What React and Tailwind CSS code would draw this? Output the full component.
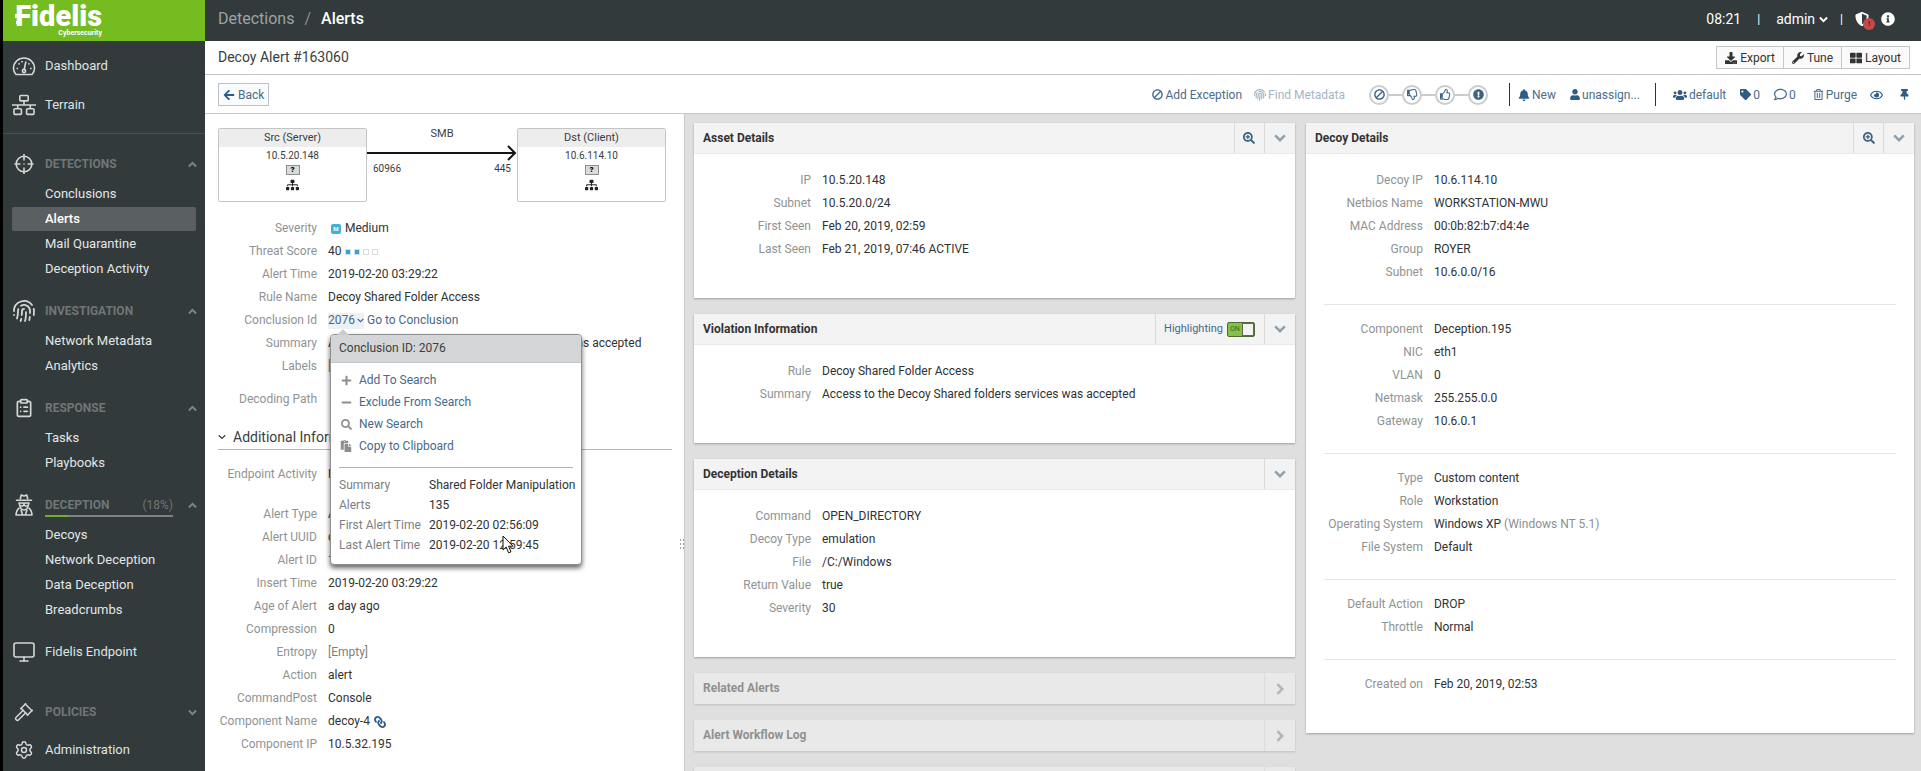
import React, { useState } from 'react';
import { Fingerprint, Monitor, Gavel, Settings, ClipboardList } from 'lucide-react';
import {
  FaArrowLeft, FaBan, FaBell, FaDownload, FaExclamationCircle, FaFingerprint, FaInfoCircle,
  FaLink, FaMinus, FaPaste, FaPlus, FaRegComment, FaRegEye, FaRegThumbsDown, FaRegThumbsUp,
  FaRegTrashAlt, FaSearch, FaSearchPlus, FaShieldAlt, FaSitemap, FaTag, FaThLarge, FaThumbtack,
  FaUser, FaUsers, FaWrench,
} from 'react-icons/fa';

const Chevron = ({ className = '', strokeWidth = 2.6 }) => (
  <svg viewBox="0 0 12 12" className={className} fill="none" stroke="currentColor" strokeWidth={strokeWidth}>
    <path d="M1.2 3.4 L6 8.2 L10.8 3.4" />
  </svg>
);

const GaugeIcon = () => (
  <svg viewBox="0 0 24 24" className="w-6 h-6" fill="none" stroke="currentColor" strokeWidth="1.6">
    <path d="M4 20.5 C2.4 19 1.5 16.8 1.5 14.3 C1.5 8.5 6.2 4 12 4 S22.5 8.5 22.5 14.3 C22.5 16.8 21.6 19 20 20.5 Z" strokeLinejoin="round" />
    <path d="M13.8 8 L12.2 15.5" strokeLinecap="round" />
    <circle cx="12" cy="17" r="1.6" />
    <path d="M4.5 14.5 h1.6 M18 14.5 h1.6 M6.5 9.3 l1.1 1 M17.5 9.3 l-1.1 1 M10 7 v1.4" />
  </svg>
);

const TerrainIcon = () => (
  <svg viewBox="0 0 24 24" className="w-6 h-6" fill="none" stroke="currentColor" strokeWidth="1.6">
    <rect x="7.8" y="2.5" width="8.4" height="5.4" rx="1" />
    <rect x="2" y="15.8" width="7.4" height="5.6" rx="1" />
    <rect x="14.6" y="15.8" width="7.4" height="5.6" rx="1" />
    <path d="M0 12 H24 M12 8 V12 M5.7 12 V15.8 M18.3 12 V15.8" />
  </svg>
);

const TargetIcon = () => (
  <svg viewBox="0 0 24 24" className="w-6 h-6" fill="none" stroke="currentColor" strokeWidth="1.6">
    <circle cx="12" cy="12" r="7.8" />
    <path d="M12 2 V8.5 M12 15.5 V22 M2.5 12 H8.5 M15.5 12 H21.5" />
    <circle cx="12" cy="12" r="0.8" fill="currentColor" stroke="none" />
  </svg>
);

const SpyIcon = () => (
  <svg viewBox="0 0 24 24" className="w-6 h-6" fill="none" stroke="currentColor" strokeWidth="1.6" strokeLinejoin="round">
    <path d="M8.2 6.4 L9.2 2 L12 3 L14.8 2 L15.8 6.4" />
    <path d="M4.5 7.2 H19.5" strokeLinecap="round" />
    <path d="M7 10 H11 L12 10.6 L13 10 H17 L16 13 H13.3 L12 11.6 L10.7 13 H8 Z" />
    <path d="M8 13.2 C8.5 15.6 10 17 12 17 S15.5 15.6 16 13.2" />
    <path d="M7.6 15 C5.4 16 4.3 18 4 22 H20 C19.7 18 18.6 16 16.4 15" />
    <path d="M9 16.8 L10.6 22 M15 16.8 L13.4 22" />
  </svg>
);

const NAV_SECTIONS = [
  { title: 'DETECTIONS', icon: <TargetIcon />, items: ['Conclusions', 'Alerts', 'Mail Quarantine', 'Deception Activity'] },
  { title: 'INVESTIGATION', icon: <Fingerprint className="w-6 h-6" strokeWidth={1.8} />, items: ['Network Metadata', 'Analytics'] },
  { title: 'RESPONSE', icon: <ClipboardList className="w-5 h-5" strokeWidth={2} />, items: ['Tasks', 'Playbooks'] },
  { title: 'DECEPTION', icon: <SpyIcon />, progress: 18, items: ['Decoys', 'Network Deception', 'Data Deception', 'Breadcrumbs'] },
];

const NavLink = ({ icon, label }) => (
  <a href="#" className="flex items-center h-[39px] pl-[9px] text-[13px] text-[#dfe3e3]">
    <span className="w-6 mr-[9px] flex justify-center text-[#d4d8d8]">{icon}</span>
    {label}
  </a>
);

const SectionHeader = ({ title, icon, progress, open = true }) => (
  <button type="button" className="flex items-center w-full h-9 pl-[9px] pr-2 text-left">
    <span className="w-6 mr-[9px] flex justify-center text-[#d4d8d8]">{icon}</span>
    <span className="relative flex items-center justify-between w-32 h-6 text-[12px] font-bold text-[#6f7677]">
      {title}
      {progress && <span className="font-normal">({progress}%)</span>}
      {progress && (
        <span className="absolute left-0 right-0 bottom-0 h-0.5 bg-[#7d8384]">
          <span className="block h-full bg-[#6fae2e]" style={{ width: `${progress}%` }} />
        </span>
      )}
    </span>
    <Chevron className={`ml-auto w-[9px] h-[9px] text-[#7d8485] ${open ? 'rotate-180' : ''}`} />
  </button>
);

const Sidebar = () => (
  <nav className="w-[205px] shrink-0 border-l-[3px] border-black bg-[#323a3b] overflow-hidden">
    <a href="#" className="block h-[41px] bg-[#74bc1f] text-white">
      <span className="relative flex flex-col items-end w-[99px] pt-[3px]">
        <span className="text-[29px] leading-[27px] font-black">Fidelis</span>
        <span className="text-[7px] leading-[7px] font-bold">Cybersecurity</span>
        <svg viewBox="0 0 6 24" className="absolute left-3 top-[6px] w-[6px] h-6" fill="currentColor">
          <rect x="2" y="1" width="3" height="3" />
          <rect x="0" y="8" width="3" height="4" />
          <rect x="1" y="15" width="3" height="3" />
        </svg>
      </span>
    </a>
    <div className="pt-[5px] pb-[9px] border-b border-[#4a5152]">
      <NavLink icon={<GaugeIcon />} label="Dashboard" />
      <NavLink icon={<TerrainIcon />} label="Terrain" />
    </div>
    {NAV_SECTIONS.map((section) => (
      <div key={section.title} className="mt-3">
        <SectionHeader {...section} />
        <ul className="flex flex-col gap-px mx-[9px]">
          {section.items.map((item) => (
            <li key={item}>
              <a
                href="#"
                className={`flex items-center h-6 pl-[33px] text-[13px] rounded-xs ${
                  item === 'Alerts' ? 'bg-[#5a6061] text-white font-medium' : 'text-[#e3e6e6]'
                }`}
              >
                {item}
              </a>
            </li>
          ))}
        </ul>
      </div>
    ))}
    <div className="pt-[10px]">
      <NavLink icon={<Monitor className="w-6 h-6" strokeWidth={1.6} />} label="Fidelis Endpoint" />
    </div>
    <div className="pt-[23px]">
      <SectionHeader title="POLICIES" icon={<Gavel className="w-5 h-5" strokeWidth={1.8} />} open={false} />
      <NavLink icon={<Settings className="w-5 h-5" strokeWidth={1.8} />} label="Administration" />
    </div>
  </nav>
);

const TopBar = () => (
  <header className="flex items-center justify-between h-[41px] pb-[3px] pl-[13px] pr-[26px] bg-[#323a3b] text-white">
    <div className="flex items-center text-[16px]">
      <a href="#" className="text-[#9ea3a3]">Detections</a>
      <span className="mx-[10px] text-[#8a9090]">/</span>
      <span className="font-medium">Alerts</span>
    </div>
    <div className="flex items-center text-[14px]">
      <span>08:21</span>
      <span className="mx-4 text-[12px]">|</span>
      <button type="button" className="flex items-center gap-1">
        admin <Chevron className="w-[9px] h-[9px]" />
      </button>
      <span className="mx-3 text-[12px]">|</span>
      <button type="button" aria-label="System health" className="relative w-5 h-4 mr-[6px]">
        <FaShieldAlt className="w-[14px] h-[14px]" />
        <span className="absolute right-0 -bottom-[3px] flex items-center justify-center w-3 h-3 rounded-full bg-[#c64a4c] text-[8px] font-bold text-[#5e1d1f]">!</span>
      </button>
      <button type="button" aria-label="About"><FaInfoCircle className="w-[14px] h-[14px]" /></button>
    </div>
  </header>
);

const HeaderButton = ({ icon, label }) => (
  <button type="button" className="flex items-center gap-[3px] h-[23px] px-2 -ml-px border border-[#c4c8c8] bg-[#fafafa] text-[12px] text-[#333]">
    {icon}
    {label}
  </button>
);

const ToolButton = ({ icon, label, name, className = '' }) => (
  <button type="button" aria-label={name} className={`flex items-center gap-[2px] text-[12px] text-[#4a6d8a] ${className}`}>
    {icon}
    {label}
  </button>
);

const STATUS_STEPS = [
  { name: 'Ignore', icon: <FaBan className="w-[11px] h-[11px] -scale-x-100" /> },
  { name: 'Dislike', icon: <FaRegThumbsDown className="w-[11px] h-[11px]" /> },
  { name: 'Like', icon: <FaRegThumbsUp className="w-[11px] h-[11px]" /> },
  { name: 'Important', icon: <FaExclamationCircle className="w-[11px] h-[11px]" /> },
];

const Toolbar = () => (
  <div className="flex items-center justify-between h-[39px] pt-px pl-[13px] pr-3 border-b border-[#c6c8c8]">
    <button type="button" className="flex items-center gap-[3px] h-[23px] px-[4px] border border-[#b9c2ca] bg-[#fafbfc] text-[12px] text-[#4a6d8a]">
      <FaArrowLeft className="w-3 h-3 text-[#2d5c86]" />
      Back
    </button>
    <div className="flex items-center">
      <ToolButton icon={<FaBan className="w-[11px] h-[11px] -scale-x-100" />} label="Add Exception" />
      <ToolButton icon={<FaFingerprint className="w-3 h-3" />} label="Find Metadata" className="ml-3 opacity-50" />
      <div className="flex items-center ml-6">
        {STATUS_STEPS.map((step, index) => (
          <React.Fragment key={step.name}>
            {index > 0 && <span className="w-[13px] h-0.5 bg-[#c9cccd]" />}
            <button
              type="button"
              aria-label={step.name}
              className="flex items-center justify-center w-5 h-5 rounded-full border-2 border-[#c9cccd] text-[#3d6382]"
            >
              {step.icon}
            </button>
          </React.Fragment>
        ))}
      </div>
      <span className="w-px h-[23px] ml-[21px] mr-2 bg-[#333]" />
      <ToolButton icon={<FaBell className="w-3 h-3 text-[#2d5c86]" />} label="New" />
      <ToolButton icon={<FaUser className="w-[10px] h-[11px] text-[#2d5c86]" />} label="unassign..." className="ml-[14px]" />
      <span className="w-px h-[23px] ml-[15px] mr-[17px] bg-[#333]" />
      <ToolButton icon={<FaUsers className="w-[14px] h-[14px] text-[#2d5c86]" />} label="default" />
      <ToolButton icon={<FaTag className="w-[11px] h-[11px] text-[#2d5c86]" />} label="0" className="ml-[14px]" />
      <ToolButton icon={<FaRegComment className="w-[13px] h-[13px]" />} label="0" className="ml-[14px]" />
      <ToolButton icon={<FaRegTrashAlt className="w-[11px] h-[11px]" />} label="Purge" className="ml-[17px]" />
      <ToolButton icon={<FaRegEye className="w-[13px] h-3 text-[#2d5c86]" />} name="Watch" className="ml-[13px]" />
      <ToolButton icon={<FaThumbtack className="w-[9px] h-[11px] text-[#2d5c86]" />} name="Pin" className="ml-[17px]" />
    </div>
  </div>
);

const Row = ({ label, children, className = '' }) => (
  <div className={`flex h-[23px] leading-[23px] text-[12px] ${className}`}>
    <dt className="w-[117px] mr-[11px] shrink-0 text-right text-[#909394]">{label}</dt>
    <dd className="relative whitespace-nowrap text-[#2f3233]">{children}</dd>
  </div>
);

const HostBox = ({ title, ip }) => (
  <div className="flex flex-col items-center w-[149px] h-[74px] rounded-xs border border-[#c4c6c6] bg-white text-[#3a3d3d]">
    <div className="w-full h-[18px] leading-[18px] text-center text-[11px] bg-[#ededed]">{title}</div>
    <div className="h-[18px] leading-[18px] text-[10px]">{ip}</div>
    <div className="w-[14px] h-[10px] leading-[8px] border border-[#8d8f8f] bg-[#d9dada] text-center text-[8px] font-black text-black">?</div>
    <FaSitemap className="w-[13px] h-3 mt-1 text-[#222]" />
  </div>
);

const FlowDiagram = () => (
  <div className="flex w-[448px]">
    <HostBox title="Src (Server)" ip="10.5.20.148" />
    <div className="flex-1 text-[#3a3d3d]">
      <div className="h-4 leading-[12px] text-center text-[11px]">SMB</div>
      <svg viewBox="0 0 150 18" className="block w-full h-[18px]" fill="none" stroke="#151515" strokeWidth="2">
        <path d="M0 9 H148 M141 2 L148 9 L141 16" />
      </svg>
      <div className="flex justify-between px-[6px] leading-[14px] text-[10px]">
        <span>60966</span>
        <span>445</span>
      </div>
    </div>
    <HostBox title="Dst (Client)" ip="10.6.114.10" />
  </div>
);

const MENU_ITEMS = [
  { label: 'Add To Search', icon: <FaPlus className="w-[11px] h-[11px]" /> },
  { label: 'Exclude From Search', icon: <FaMinus className="w-[11px] h-[11px]" /> },
  { label: 'New Search', icon: <FaSearch className="w-[11px] h-[11px]" /> },
  { label: 'Copy to Clipboard', icon: <FaPaste className="w-3 h-3" /> },
];

const MENU_DETAILS = [
  ['Summary', 'Shared Folder Manipulation'],
  ['Alerts', '135'],
  ['First Alert Time', '2019-02-20 02:56:09'],
  ['Last Alert Time', '2019-02-20 12:59:45'],
];

const ConclusionPopover = () => (
  <div className="absolute left-[2px] top-[25px] z-10 w-[252px] h-[231px] rounded border border-[#8e9091] bg-white shadow-[0_3px_5px_rgba(0,0,0,0.6)]">
    <span className="absolute left-[6px] -top-[6px] w-0 h-0 border-x-[6px] border-x-transparent border-b-[6px] border-b-[#c9cbcc]" />
    <div className="h-7 leading-[27px] pl-2 rounded-t bg-[#d3d5d6] border-b border-[#c4c6c7] text-[#3d4041]">Conclusion ID: 2076</div>
    <ul className="pt-[6px]">
      {MENU_ITEMS.map((item) => (
        <li key={item.label}>
          <button type="button" className="flex items-center h-[22px] pl-[9px] text-[#47698a]">
            <span className="w-3 mr-[7px] flex justify-center text-[#8c8f90]">{item.icon}</span>
            {item.label}
          </button>
        </li>
      ))}
    </ul>
    <dl className="mx-2 mt-[10px] pt-[7px] border-t border-[#b4b6b6]">
      {MENU_DETAILS.map(([label, value]) => (
        <div key={label} className="flex h-5 leading-5">
          <dt className="w-[90px] shrink-0 text-[#7c7f80]">{label}</dt>
          <dd>{value}</dd>
        </div>
      ))}
    </dl>
    <svg viewBox="0 0 12 19" className="absolute left-[171px] top-[200px] w-3 h-[19px]" fill="#fff" stroke="#111" strokeWidth="1">
      <path d="M1 1 V15 L4.2 12 L6.6 17.8 L9 16.8 L6.6 11.2 H11 Z" />
    </svg>
  </div>
);

const AlertPanel = () => (
  <section className="relative w-[480px] shrink-0 bg-white border-r border-[#c9cbcb]">
    <div className="pt-[14px] pl-[13px]">
      <FlowDiagram />
    </div>
    <dl className="-ml-[5px] pt-[15px]">
      <Row label="Severity">
        <span className="flex items-center gap-1 pl-[3px]">
          <span className="flex items-center justify-center w-[10px] h-[10px] rounded-xs bg-[#3fb2dc] text-[6px] font-bold text-white">M</span>
          Medium
        </span>
      </Row>
      <Row label="Threat Score">
        <span className="flex items-center gap-[3px]">
          40
          <span className="w-[6px] h-[6px] border border-[#c4e4f2] bg-[#3f9fc9]" />
          <span className="w-[6px] h-[6px] border border-[#c4e4f2] bg-[#3f9fc9]" />
          <span className="w-[6px] h-[6px] border border-[#d9dcdd]" />
          <span className="w-[6px] h-[6px] border border-[#d9dcdd]" />
        </span>
      </Row>
      <Row label="Alert Time">2019-02-20 03:29:22</Row>
      <Row label="Rule Name">Decoy Shared Folder Access</Row>
      <Row label="Conclusion Id">
        <span className="flex items-center h-full gap-[3px] text-[#47698a]">
          <button type="button" className="flex items-center gap-[2px] h-4 bg-[#edf1f6]">
            2076 <Chevron className="w-[7px] h-[7px]" strokeWidth={2} />
          </button>
          <a href="#">Go to Conclusion</a>
        </span>
        <ConclusionPopover />
      </Row>
      <Row label="Summary">Access to the Decoy Shared folders services was accepted</Row>
      <Row label="Labels"><span className="text-[#7c7f80]">[Empty]</span></Row>
      <Row label="Decoding Path" className="mt-[10px]">{''}</Row>
    </dl>
    <h2 className="flex items-center gap-[7px] h-[39px] pt-[14px] ml-[13px] mr-3 border-b border-[#b4b6b6] text-[14px] text-[#3a3d3d]">
      <Chevron className="w-2 h-2" strokeWidth={1.8} />
      Additional Information
    </h2>
    <dl className="-ml-[5px] pt-[13px]">
      <Row label="Endpoint Activity">N/A</Row>
      <Row label="Alert Type" className="mt-[17px]">Alert</Row>
      <Row label="Alert UUID">c163060</Row>
      <Row label="Alert ID">163060</Row>
      <Row label="Insert Time">2019-02-20 03:29:22</Row>
      <Row label="Age of Alert">a day ago</Row>
      <Row label="Compression">0</Row>
      <Row label="Entropy"><span className="text-[#7c7f80]">[Empty]</span></Row>
      <Row label="Action">alert</Row>
      <Row label="CommandPost">Console</Row>
      <Row label="Component Name">
        <a href="#" className="flex items-center gap-1">
          decoy-4 <FaLink className="w-3 h-3 -scale-x-100 text-[#2d5c86]" />
        </a>
      </Row>
      <Row label="Component IP">10.5.32.195</Row>
    </dl>
    <svg viewBox="0 0 4 12" className="absolute right-0 top-[424px] w-1 h-3" fill="#9a9c9c">
      <path d="M0 1 h1 v2 h-1 Z M3 1 h1 v2 h-1 Z M0 5 h1 v2 h-1 Z M3 5 h1 v2 h-1 Z M0 9 h1 v2 h-1 Z M3 9 h1 v2 h-1 Z" />
    </svg>
  </section>
);

const Card = ({ title, zoom, actions, children }) => (
  <section className="bg-white shadow-[0_1px_2px_rgba(0,0,0,0.3)]">
    <div className="flex h-[31px] bg-[#f3f3f3] border-b border-[#e9e9e9]">
      <h2 className="flex-1 pl-[9px] leading-[30px] text-[12px] font-bold text-[#333]">{title}</h2>
      {actions}
      {zoom && (
        <button type="button" aria-label={`Zoom ${title}`} className="flex items-center justify-center w-[30px] border-l border-[#dadada] text-[#3d6382]">
          <FaSearchPlus className="w-3 h-3" />
        </button>
      )}
      <button type="button" aria-label={`Collapse ${title}`} className="flex items-center justify-center w-[31px] border-l border-[#dadada] text-[#8fa0ae]">
        <Chevron className="w-3 h-3" />
      </button>
    </div>
    <div className="pt-[15px] pb-[37px]">{children}</div>
  </section>
);

const CollapsedCard = ({ title }) => (
  <section className="flex h-[31px] shrink-0 bg-[#e9e9e9] shadow-[0_1px_2px_rgba(0,0,0,0.15)]">
    <h2 className="flex-1 pl-[9px] leading-[30px] text-[12px] font-bold text-[#8f9192]">{title}</h2>
    <button type="button" aria-label={`Expand ${title}`} className="flex items-center justify-center w-[31px] border-l border-[#dcdcdc] text-[#b3b6b8]">
      <Chevron className="w-3 h-3 -rotate-90" />
    </button>
  </section>
);

const HighlightToggle = () => {
  const [on, setOn] = useState(true);

  return (
    <label className="flex items-center gap-1 pl-2 pr-[9px] border-l border-[#dadada] text-[11px] text-[#47698a]">
      Highlighting
      <input type="checkbox" className="sr-only" checked={on} onChange={(e) => setOn(e.target.checked)} />
      <span className={`flex items-center justify-between w-7 h-[15px] pl-[2px] rounded-xs border border-[#4f6b35] text-[7px] text-[#3d6b12] ${on ? 'bg-[#86c04a]' : 'flex-row-reverse bg-gray-300'}`}>
        {on ? 'ON' : 'OFF'}
        <span className="w-3 h-[13px] border border-[#5d6b50] bg-[#f3f3f3]" />
      </span>
    </label>
  );
};

const DECOY_GROUPS = [
  [['Decoy IP', '10.6.114.10'], ['Netbios Name', 'WORKSTATION-MWU'], ['MAC Address', '00:0b:82:b7:d4:4e'], ['Group', 'ROYER'], ['Subnet', '10.6.0.0/16']],
  [['Component', 'Deception.195'], ['NIC', 'eth1'], ['VLAN', '0'], ['Netmask', '255.255.0.0'], ['Gateway', '10.6.0.1']],
  [['Type', 'Custom content'], ['Role', 'Workstation'], ['Operating System', 'Windows XP', '(Windows NT 5.1)'], ['File System', 'Default']],
  [['Default Action', 'DROP'], ['Throttle', 'Normal']],
  [['Created on', 'Feb 20, 2019, 02:53']],
];

const DetailCards = () => (
  <div className="flex flex-1 items-start gap-[11px] pt-[9px] pl-[9px] pr-[7px] bg-[#dfdfdf] overflow-hidden">
    <div className="flex flex-col gap-4 flex-[84_1_0%]">
      <Card title="Asset Details" zoom>
        <dl>
          <Row label="IP">10.5.20.148</Row>
          <Row label="Subnet">10.5.20.0/24</Row>
          <Row label="First Seen">Feb 20, 2019, 02:59</Row>
          <Row label="Last Seen">Feb 21, 2019, 07:46 ACTIVE</Row>
        </dl>
      </Card>
      <Card title="Violation Information" actions={<HighlightToggle />}>
        <dl>
          <Row label="Rule">Decoy Shared Folder Access</Row>
          <Row label="Summary">Access to the Decoy Shared folders services was accepted</Row>
        </dl>
      </Card>
      <Card title="Deception Details">
        <dl>
          <Row label="Command">OPEN_DIRECTORY</Row>
          <Row label="Decoy Type">emulation</Row>
          <Row label="File">/C:/Windows</Row>
          <Row label="Return Value">true</Row>
          <Row label="Severity">30</Row>
        </dl>
      </Card>
      <CollapsedCard title="Related Alerts" />
      <CollapsedCard title="Alert Workflow Log" />
      <CollapsedCard title="" />
    </div>
    <div className="flex-[85_1_0%]">
      <Card title="Decoy Details" zoom>
        {DECOY_GROUPS.map((group, index) => (
          <div key={group[0][0]}>
            {index > 0 && <hr className="mx-[18px] mt-5 mb-[13px] border-[#e6e6e6]" />}
            <dl>
              {group.map(([label, value, note]) => (
                <Row key={label} label={label}>
                  {value}
                  {note && <span className="text-[#8c8f90]"> {note}</span>}
                </Row>
              ))}
            </dl>
          </div>
        ))}
      </Card>
    </div>
  </div>
);

export default function App() {
  return (
    <div className="flex h-screen overflow-hidden bg-white font-['Roboto',sans-serif]">
      <Sidebar />
      <main className="flex flex-col flex-1 min-w-0">
        <TopBar />
        <div className="flex items-center justify-between h-[34px] pl-[13px] pr-[11px] border-b border-[#c6c8c8]">
          <h1 className="text-[14px] text-[#3a3d3d]">Decoy Alert #163060</h1>
          <div className="flex">
            <HeaderButton icon={<FaDownload className="w-3 h-3" />} label="Export" />
            <HeaderButton icon={<FaWrench className="w-3 h-3" />} label="Tune" />
            <HeaderButton icon={<FaThLarge className="w-3 h-3" />} label="Layout" />
          </div>
        </div>
        <Toolbar />
        <div className="flex flex-1 min-h-0">
          <AlertPanel />
          <DetailCards />
        </div>
      </main>
    </div>
  );
}
